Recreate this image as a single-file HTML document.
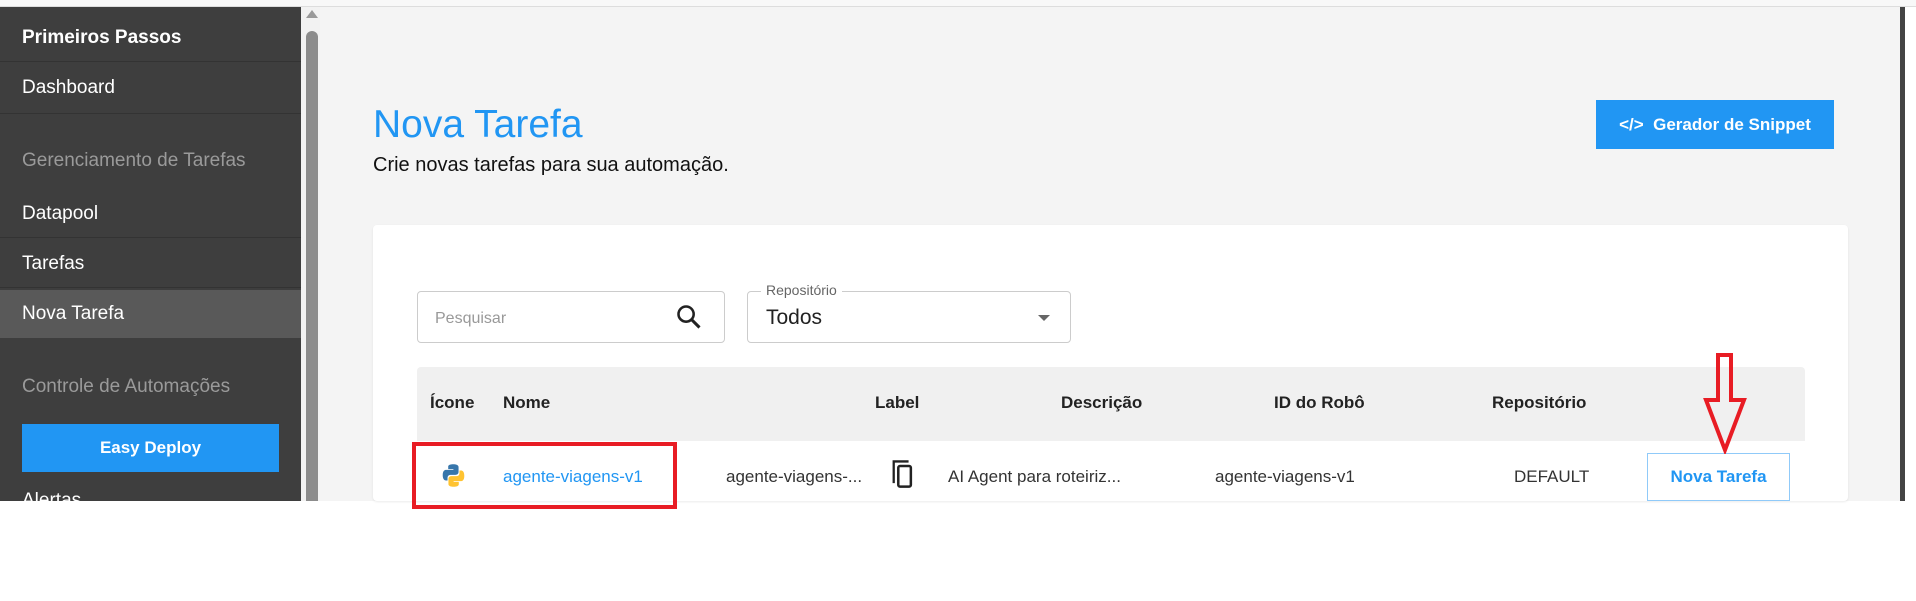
<!DOCTYPE html>
<html><head><meta charset="utf-8"><style>
*{margin:0;padding:0;box-sizing:border-box}
body{width:1916px;height:601px;background:#fff;position:relative;overflow:hidden;font-family:"Liberation Sans",sans-serif}
.a{position:absolute}
.side{left:0;top:7px;width:301px;height:494px;background:#3e3e3e}
.it{position:absolute;left:22px;color:#fff;font-size:19px;line-height:1;white-space:nowrap}
.dv{position:absolute;left:0;width:301px;height:1px;background:#333}
.gr{color:#9a9a9a}
.main{left:320px;top:7px;width:1580px;height:494px;background:#f4f4f4}
.th{position:absolute;top:393px;font-size:17px;font-weight:bold;color:#222;white-space:nowrap}
.td{position:absolute;top:467px;font-size:17px;color:#333;white-space:nowrap}
</style></head><body>
<div class="a" style="left:0;top:0;width:1916px;height:7px;background:#f8f8f8;border-bottom:1px solid #ddd"></div>
<div class="a side">
 <div class="it" style="top:21px;font-weight:bold">Primeiros Passos</div>
 <div class="dv" style="top:54px"></div>
 <div class="it" style="top:71px">Dashboard</div>
 <div class="dv" style="top:106px"></div>
 <div class="it gr" style="top:144px">Gerenciamento de Tarefas</div>
 <div class="it" style="top:197px">Datapool</div>
 <div class="dv" style="top:230px"></div>
 <div class="it" style="top:247px">Tarefas</div>
 <div class="dv" style="top:280px"></div>
 <div class="a" style="left:0;top:283px;width:301px;height:48px;background:#595959"></div>
 <div class="it" style="top:297px">Nova Tarefa</div>
 <div class="it gr" style="top:370px">Controle de Automações</div>
 <div class="a" style="left:22px;top:417px;width:257px;height:48px;background:#2196f3;color:#fff;font-weight:bold;font-size:17px;text-align:center;line-height:48px">Easy Deploy</div>
 <div class="it" style="top:484px">Alertas</div>
</div>
<div class="a" style="left:301px;top:7px;width:19px;height:494px;background:#f2f2f2"></div>
<div class="a" style="left:306px;top:10px;width:0;height:0;border-left:6px solid transparent;border-right:6px solid transparent;border-bottom:8px solid #999"></div>
<div class="a" style="left:306px;top:31px;width:12px;height:470px;background:#8c8c8c;border-radius:6px 6px 0 0"></div>
<div class="a main"></div>
<div class="a" style="left:1900px;top:7px;width:5px;height:494px;background:#444"></div>
<div class="a" style="left:373px;top:103px;font-size:39px;color:#2196f3">Nova Tarefa</div>
<div class="a" style="left:373px;top:154px;font-size:20px;color:#111">Crie novas tarefas para sua automação.</div>
<div class="a" style="left:1596px;top:100px;width:238px;height:49px;background:#2196f3;color:#fff;font-weight:bold;font-size:17px;line-height:49px;text-align:center">&lt;/&gt;&nbsp; Gerador de Snippet</div>
<div class="a" style="left:373px;top:225px;width:1475px;height:276px;background:#fff;border-radius:4px;box-shadow:0 1px 2px rgba(0,0,0,.08)"></div>
<div class="a" style="left:417px;top:291px;width:308px;height:52px;border:1px solid #ccc;border-radius:4px"></div>
<div class="a" style="left:435px;top:310px;font-size:16px;color:#999">Pesquisar</div>
<svg class="a" style="left:675px;top:303px" width="28" height="28" viewBox="0 0 24 24"><circle cx="9.5" cy="9.5" r="6.5" fill="none" stroke="#222" stroke-width="2.2"/><path d="M14.5 14.5L21 21" stroke="#222" stroke-width="2.6"/></svg>
<div class="a" style="left:747px;top:291px;width:324px;height:52px;border:1px solid #ccc;border-radius:4px"></div>
<div class="a" style="left:761px;top:282px;padding:0 5px;background:#fff;font-size:14px;color:#666">Repositório</div>
<div class="a" style="left:766px;top:306px;font-size:21px;color:#222">Todos</div>
<div class="a" style="left:1038px;top:315px;width:0;height:0;border-left:6px solid transparent;border-right:6px solid transparent;border-top:6px solid #666"></div>
<div class="a" style="left:417px;top:367px;width:1388px;height:74px;background:#f0f0f0;border-radius:4px 4px 0 0"></div>
<div class="th" style="left:430px">Ícone</div>
<div class="th" style="left:503px">Nome</div>
<div class="th" style="left:875px">Label</div>
<div class="th" style="left:1061px">Descrição</div>
<div class="th" style="left:1274px">ID do Robô</div>
<div class="th" style="left:1492px">Repositório</div>
<svg class="a" style="left:440px;top:462px" width="27" height="27" viewBox="0 0 24 24"><path d="M11.8 2C7 2 7.3 4.1 7.3 4.1V6.3h4.6V7H5.5S2.4 6.6 2.4 11.6s2.7 4.8 2.7 4.8h1.6v-2.3s-.1-2.7 2.7-2.7h4.5s2.6 0 2.6-2.5V4.6S16.9 2 11.8 2z" fill="#3776ab"/><path d="M12.2 22c4.8 0 4.5-2.1 4.5-2.1v-2.2h-4.6V17h6.4s3.1.4 3.1-4.6-2.7-4.8-2.7-4.8h-1.6v2.3s.1 2.7-2.7 2.7h-4.5s-2.6 0-2.6 2.5v4.3S7.1 22 12.2 22z" fill="#ffc331"/></svg>
<div class="td" style="left:503px;color:#2196f3">agente-viagens-v1</div>
<div class="td" style="left:726px">agente-viagens-...</div>
<svg class="a" style="left:890px;top:458px" width="28" height="32" viewBox="0 0 24 28"><path d="M3 22V3h13" fill="none" stroke="#222" stroke-width="2"/><rect x="7" y="7" width="11" height="18" rx="1.5" fill="none" stroke="#222" stroke-width="2.2"/></svg>
<div class="td" style="left:948px">AI Agent para roteiriz...</div>
<div class="td" style="left:1215px">agente-viagens-v1</div>
<div class="td" style="left:1514px">DEFAULT</div>
<div class="a" style="left:1647px;top:453px;width:143px;height:48px;border:1px solid #90caf9;color:#2196f3;font-weight:bold;font-size:17px;text-align:center;line-height:46px">Nova Tarefa</div>
<div class="a" style="left:412px;top:442px;width:265px;height:67px;border:4px solid #e81c24"></div>
<svg class="a" style="left:1690px;top:352px" width="70" height="102" viewBox="0 0 70 102"><path d="M28 3h13v45h13L35 98 16 48h12z" fill="none" stroke="#e81c24" stroke-width="4"/></svg>
</body></html>
